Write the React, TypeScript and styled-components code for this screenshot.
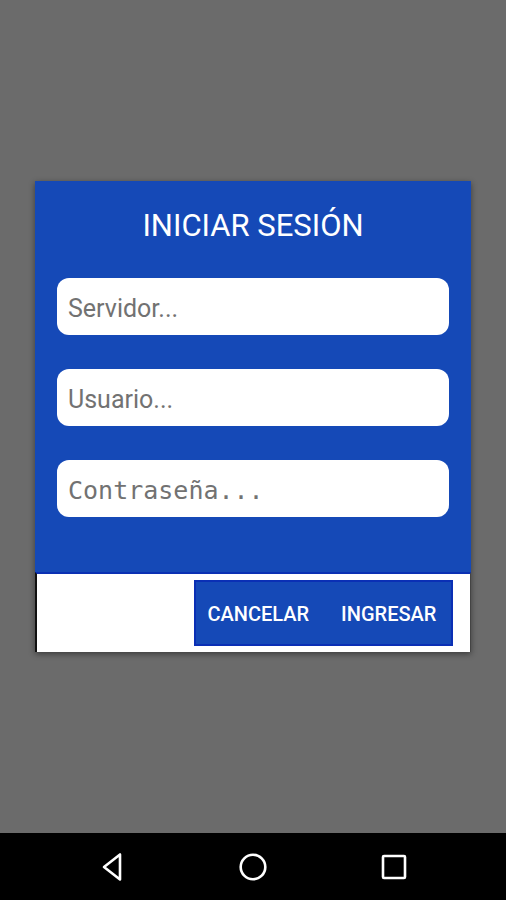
import * as React from 'react';
import styled, { createGlobalStyle } from 'styled-components';

const GlobalStyle = createGlobalStyle`
    html, body {
        margin: 0;
        padding: 0;
        background: #6b6b6b;
        font-family: Roboto, "Liberation Sans", sans-serif;
    }
`;

const Screen = styled.div`
    display: flex;
    flex-direction: column;
    width: 506px;
    height: 900px;
    background: #6b6b6b;
`;

const Content = styled.div`
    flex: 1;
    display: flex;
    align-items: center;
    justify-content: center;
`;

const Dialog = styled.div`
    width: 436px;
    display: flex;
    flex-direction: column;
    box-shadow: 0 2px 6px rgba(0, 0, 0, 0.45);
`;

const BluePanel = styled.div`
    background: #1549b7;
    padding: 25px 22px 55px;
    display: flex;
    flex-direction: column;
    gap: 34px;
`;

const Title = styled.h1`
    margin: 0 0 -2px;
    color: #ffffff;
    font-family: Roboto, "Liberation Sans", sans-serif;
    font-size: 31px;
    font-weight: 400;
    line-height: 40px;
    text-align: center;
`;

const Field = styled.input<{ $mono?: boolean }>`
    box-sizing: border-box;
    width: 100%;
    height: 57px;
    border: none;
    border-radius: 12px;
    background: #ffffff;
    padding: 3px 11px 0;
    font-family: ${(p) => (p.$mono ? '"DejaVu Sans Mono", "Liberation Mono", monospace' : 'Roboto, "Liberation Sans", sans-serif')};
    font-size: 25px;
    outline: none;

    &::placeholder {
        color: #727272;
    }
`;

const Footer = styled.div`
    background: #ffffff;
    border-top: 2px solid #0b30b3;
    border-left: 2px solid #111111;
    border-right: 1px solid #444444;
    height: 80px;
    box-sizing: border-box;
    display: flex;
    justify-content: flex-end;
    align-items: flex-start;
    padding: 6px 17px 0 0;
`;

const ButtonGroup = styled.div`
    display: flex;
    width: 259px;
    height: 66px;
    box-sizing: border-box;
    background: #1549b7;
    border: 2px solid #0a2fb5;
`;

const ActionButton = styled.button<{ $shift?: number }>`
    flex: 1;
    border: none;
    background: transparent;
    color: #ffffff;
    font-family: Roboto, "Liberation Sans", sans-serif;
    font-size: 20px;
    font-weight: 500;
    padding: 2px 0 0 ${(p) => p.$shift || 0}px;
    cursor: pointer;
`;

const NavBar = styled.div`
    height: 67px;
    background: #000000;
    display: flex;
    align-items: center;
    justify-content: center;
    gap: 105px;
`;

const NavIcon = styled.svg`
    width: 36px;
    height: 36px;
`;

export default function App() {
    return (
        <>
            <GlobalStyle />
            <Screen>
                <Content>
                    <Dialog>
                        <BluePanel>
                            <Title>INICIAR SESIÓN</Title>
                            <Field placeholder='Servidor...' />
                            <Field placeholder='Usuario...' />
                            <Field $mono type='password' placeholder='Contraseña...' />
                        </BluePanel>
                        <Footer>
                            <ButtonGroup>
                                <ActionButton>CANCELAR</ActionButton>
                                <ActionButton $shift={6}>INGRESAR</ActionButton>
                            </ButtonGroup>
                        </Footer>
                    </Dialog>
                </Content>
                <NavBar>
                    <NavIcon viewBox='0 0 36 36' fill='none' stroke='#ffffff' strokeWidth='2.6' strokeLinejoin='round'>
                        <path d='M26 5.5 L26 30.5 L10 18 Z' />
                    </NavIcon>
                    <NavIcon viewBox='0 0 36 36' fill='none' stroke='#ffffff' strokeWidth='2.6'>
                        <circle cx='18' cy='18' r='12.3' />
                    </NavIcon>
                    <NavIcon viewBox='0 0 36 36' fill='none' stroke='#ffffff' strokeWidth='2.6' strokeLinejoin='round'>
                        <rect x='7' y='7' width='22' height='22' rx='1' />
                    </NavIcon>
                </NavBar>
            </Screen>
        </>
    );
}
